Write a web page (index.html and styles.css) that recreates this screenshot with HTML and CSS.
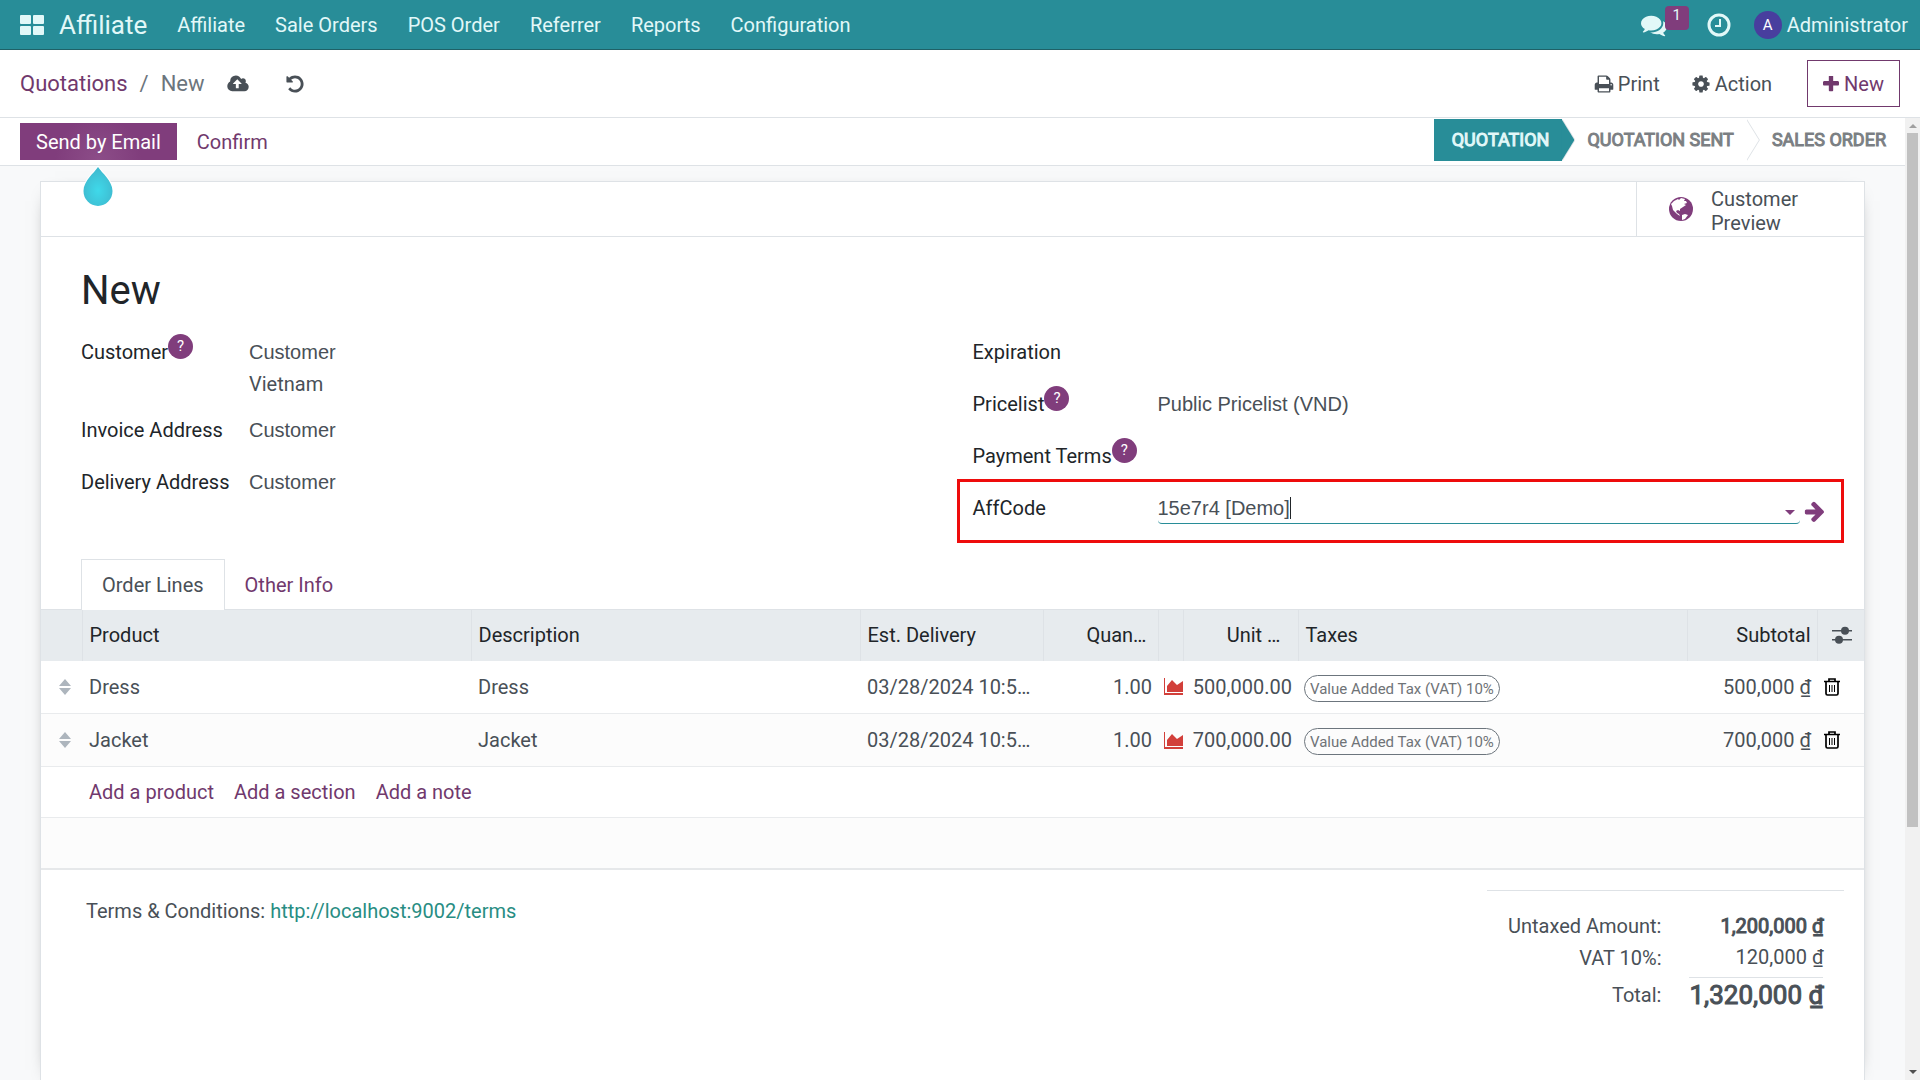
FILE: index.html
```html
<!DOCTYPE html>
<html lang="en">
<head>
    <meta charset="UTF-8">
    <meta name="viewport" content="width=device-width, initial-scale=1.0">
    <title>New - Quotations</title>
    <link rel="stylesheet" href="styles.css">
</head>
<body>

    <!-- shared icons -->
    <svg class="sprite" aria-hidden="true">
        <symbol id="i-chart" viewBox="0 0 19 17"><path d="M0 0h1v15h18v2H0zM3 14V8l5-6 5 5 6-4v11z"/></symbol>
        <symbol id="i-trash" viewBox="0 0 16 18">
            <path d="M0 3.500h16M5 3V1h6v2M2 4v11.500q0 1.500 1.500 1.500h9q1.500 0 1.500-1.500V4" fill="none" stroke="currentColor" stroke-width="1.700"/>
            <path d="M5.500 7v7M8 7v7M10.500 7v7" fill="none" stroke="currentColor" stroke-width="1"/>
        </symbol>
        <symbol id="i-sort" viewBox="0 0 12 16"><path d="M0 7l6-7 6 7zM0 9h12l-6 7z"/></symbol>
    </svg>

    <header class="navbar">
        <a href="#" class="apps" aria-label="Apps">
            <svg viewBox="0 0 24 20" width="24" height="20"><rect width="11" height="9" rx="1"/><rect x="13" width="11" height="9" rx="1"/><rect y="11" width="11" height="9" rx="1"/><rect x="13" y="11" width="11" height="9" rx="1"/></svg>
        </a>
        <a href="#" class="brand">Affiliate</a>
        <nav class="menu">
            <a href="#">Affiliate</a>
            <a href="#">Sale Orders</a>
            <a href="#">POS Order</a>
            <a href="#">Referrer</a>
            <a href="#">Reports</a>
            <a href="#">Configuration</a>
        </nav>
        <div class="systray">
            <button type="button" class="chat" aria-label="Messages">
                <svg viewBox="0 0 1792 1792" width="26" height="26"><path d="M1408 768q0 139-94 257t-256.500 186.500-353.500 68.500q-86 0-176-16-124 88-278 128-36 9-86 16h-3q-11 0-20.500-8t-11.500-21q-1-3-1-6.500t.5-6.500 2-6l2.500-5 3.500-5.500 4-5 4.500-5 4-4.500q5-6 23-25t26-29.500 22.500-29 25-38.500 20.500-44q-124-72-195-177t-71-224q0-139 94-257t256.500-186.500 353.500-68.500 353.500 68.500 256.500 186.500 94 257zm384 256q0 120-71 224.500t-195 176.500q10 24 20.500 44t25 38.500 22.500 29 26 29.500 23 25q1 1 4 4.500t4.500 5 4 5 3.500 5.500l2.500 5 2 6 .5 6.500-1 6.500q-3 14-13 22t-22 7q-50-7-86-16-154-40-278-128-90 16-176 16-271 0-472-132 58 4 88 4 161 0 309-45t264-129q125-92 192-212t67-254q0-77-23-152 129 71 204 178t75 230z"/></svg>
                <span class="count">1</span>
            </button>
            <button type="button" class="clock" aria-label="Activities">
                <svg viewBox="0 0 24 24" width="24" height="24"><circle cx="12" cy="12" r="10" fill="none" stroke="currentColor" stroke-width="3"/><path d="M13 6v7H8" fill="none" stroke="currentColor" stroke-width="2"/></svg>
            </button>
            <button type="button" class="user"><span class="avatar">A</span>Administrator</button>
        </div>
    </header>

    <div class="control-panel">
        <nav class="breadcrumb"><a href="#">Quotations</a><span>/</span><span>New</span></nav>
        <button type="button" class="icon-btn" aria-label="Save">
            <svg viewBox="0 0 1920 1792" width="22" height="20"><path d="M1280 864q0-14-9-23l-352-352q-9-9-23-9t-23 9l-351 351q-10 12-10 24 0 14 9 23t23 9h224v352q0 13 9.500 22.500t22.500 9.500h192q13 0 22.500-9.500t9.500-22.500v-352h224q13 0 22.500-9.500t9.500-22.500zm640 288q0 159-112.500 271.500t-271.500 112.500h-1088q-185 0-316.500-131.500t-131.500-316.500q0-130 70-240t188-165q-2-30-2-43 0-212 150-362t362-150q156 0 285.500 87t188.500 231q71-62 166-62 106 0 181 75t75 181q0 76-41 138 130 31 213.500 135.500t83.500 238.500z"/></svg>
        </button>
        <button type="button" class="icon-btn" aria-label="Discard">
            <svg viewBox="0 0 1792 1792" width="20" height="20"><path d="M1664 896q0 156-61 298t-164 245-245 164-298 61q-172 0-327-72.500t-264-204.500q-7-10-6.500-22.500t8.500-20.500l137-138q10-9 25-9 16 2 23 12 73 95 179 147t225 52q104 0 198.500-40.500t163.500-109.500 109.500-163.500 40.500-198.500-40.500-198.500-109.500-163.500-163.500-109.500-198.500-40.500q-98 0-188 35.500t-160 101.500l137 138q31 30 14 69-17 40-59 40h-448q-26 0-45-19t-19-45v-448q0-42 40-59 39-17 69 14l130 129q107-101 244.500-156.500t284.500-55.500q156 0 298 61t245 164 164 245 61 298z"/></svg>
        </button>
        <div class="actions">
            <button type="button" class="action">
                <svg viewBox="0 0 1792 1792" width="20" height="20"><path d="M448 1536h896v-256h-896v256zm0-640h896v-384h-160q-40 0-68-28t-28-68v-160h-640v640zm1152 64q0-26-19-45t-45-19-45 19-19 45 19 45 45 19 45-19 19-45zm128 0v416q0 13-9.500 22.500t-22.500 9.500h-224v160q0 40-28 68t-68 28h-960q-40 0-68-28t-28-68v-160h-224q-13 0-22.500-9.500t-9.500-22.500v-416q0-79 56.500-135.500t135.500-56.500h64v-544q0-40 28-68t68-28h672q40 0 88 20t76 48l152 152q28 28 48 76t20 88v256h64q79 0 135.500 56.500t56.500 135.500z"/></svg>Print
            </button>
            <button type="button" class="action">
                <svg viewBox="0 0 1792 1792" width="20" height="20"><path d="M1152 896q0-106-75-181t-181-75-181 75-75 181 75 181 181 75 181-75 75-181zm512-109v222q0 12-8 23t-20 13l-185 28q-19 54-39 91 35 50 107 138 10 12 10 25t-9 23q-27 37-99 108t-94 71q-12 0-26-9l-138-108q-44 23-91 38-16 136-29 186-7 28-36 28h-222q-14 0-24.500-8.500t-11.500-21.500l-28-184q-49-16-90-37l-141 107q-10 9-25 9-14 0-25-11-126-114-165-168-7-10-7-23 0-12 8-23 15-21 51-66.500t54-70.500q-27-50-41-99l-183-27q-13-2-21-12.500t-8-23.500v-222q0-12 8-23t19-13l186-28q14-46 39-92-40-57-107-138-10-12-10-24 0-10 9-23 26-36 98.500-107.500t94.500-71.500q13 0 26 10l138 107q44-23 91-38 16-136 29-186 7-28 36-28h222q14 0 24.500 8.500t11.500 21.500l28 184q49 16 90 37l142-107q9-9 24-9 13 0 25 10 129 119 165 170 7 8 7 22 0 12-8 23-15 21-51 66.500t-54 70.500q26 50 41 98l183 28q13 2 21 12.500t8 23.500z"/></svg>Action
            </button>
            <button type="button" class="new-btn">
                <svg viewBox="192 192 1408 1408" width="16" height="16"><path d="M1600 736v192q0 40-28 68t-68 28h-416v416q0 40-28 68t-68 28h-192q-40 0-68-28t-28-68v-416h-416q-40 0-68-28t-28-68v-192q0-40 28-68t68-28h416v-416q0-40 28-68t68-28h192q40 0 68 28t28 68v416h416q40 0 68 28t28 68z"/></svg>New
            </button>
        </div>
    </div>

    <div class="viewport">
        <main class="content">

            <div class="statusbar">
                <div class="send-wrap">
                    <button type="button" class="send">Send by Email</button>
                    <svg class="drop" viewBox="0 0 34 44" width="34" height="44">
                        <defs><radialGradient id="dropfill" cx="50%" cy="60%" r="55%"><stop offset="0" stop-color="#3fd9ea"/><stop offset="1" stop-color="#3fbbd0"/></radialGradient></defs>
                        <path d="M17 3C21 9 31.500 17 31.500 27a14.500 15 0 0 1-29 0C2.500 17 13 9 17 3z" fill="url(#dropfill)" stroke="#fff" stroke-width="2" paint-order="stroke"/>
                    </svg>
                </div>
                <button type="button" class="confirm">Confirm</button>
                <ol class="stages">
                    <li class="current">Quotation</li>
                    <li>Quotation Sent</li>
                    <li>Sales Order</li>
                </ol>
            </div>

            <div class="sheet-bg">
                <div class="sheet">
                    <div class="button-box">
                        <button type="button" class="preview">
                            <svg viewBox="0 0 24 24" width="24" height="24"><circle cx="12" cy="12" r="12"/><path d="M5 4l4-2 1 1 2-2 4 1-1 2 2 0 1 2-3 1 2 1-3 2-3 2 0 2-2-1-2 1 1 2 2 1 1 2-3-2-4-4-1-4-1-2zM13 18l3-1 3 1-3 4-3 1z" fill="#fff"/></svg>
                            <span>Customer<br>Preview</span>
                        </button>
                    </div>

                    <div class="sheet-body">
                        <h1>New</h1>
                        <form class="groups" autocomplete="off">
                            <div class="group">
                                <div class="field tall">
                                    <div class="label"><label for="customer">Customer</label><sup>?</sup></div>
                                    <div class="value"><input type="text" id="customer" value="Customer"><span>Vietnam</span></div>
                                </div>
                                <div class="field">
                                    <div class="label"><label for="invoice">Invoice Address</label></div>
                                    <div class="value"><input type="text" id="invoice" value="Customer"></div>
                                </div>
                                <div class="field">
                                    <div class="label"><label for="delivery">Delivery Address</label></div>
                                    <div class="value"><input type="text" id="delivery" value="Customer"></div>
                                </div>
                            </div>
                            <div class="group right">
                                <div class="field">
                                    <div class="label"><label for="expiration">Expiration</label></div>
                                    <div class="value"><input type="text" id="expiration"></div>
                                </div>
                                <div class="field">
                                    <div class="label"><label for="pricelist">Pricelist</label><sup>?</sup></div>
                                    <div class="value"><input type="text" id="pricelist" value="Public Pricelist (VND)"></div>
                                </div>
                                <div class="field">
                                    <div class="label"><label for="terms">Payment Terms</label><sup>?</sup></div>
                                    <div class="value"><input type="text" id="terms"></div>
                                </div>
                                <div class="field marked">
                                    <div class="label"><label for="affcode">AffCode</label></div>
                                    <div class="value active"><input type="text" id="affcode" value="15e7r4 [Demo]"><i class="cursor"></i><i class="caret"></i></div>
                                    <button type="button" class="open" aria-label="Open record">
                                        <svg viewBox="64 120 1536 1620" width="20" height="21"><path d="M1600 960q0 54-37 91l-651 651q-39 37-91 37-51 0-90-37l-75-75q-38-38-38-91t38-91l293-293h-704q-52 0-84.500-37.500t-32.500-90.500v-128q0-53 32.500-90.500t84.500-37.500h704l-293-294q-38-36-38-90t38-90l75-75q38-38 90-38 53 0 91 38l651 651q37 35 37 90z"/></svg>
                                    </button>
                                </div>
                            </div>
                        </form>
                        <div class="tabs">
                            <a href="#" class="tab selected">Order Lines</a>
                            <a href="#" class="tab">Other Info</a>
                        </div>
                    </div>

                    <table class="lines">
                        <colgroup>
                            <col class="c-handle"><col><col><col class="c-date"><col class="c-qty"><col class="c-chart"><col class="c-price"><col><col class="c-sub"><col class="c-opt">
                        </colgroup>
                        <thead>
                            <tr>
                                <th></th>
                                <th>Product</th>
                                <th>Description</th>
                                <th>Est. Delivery</th>
                                <th class="num cut">Quan…</th>
                                <th></th>
                                <th class="num cut price">Unit …</th>
                                <th>Taxes</th>
                                <th class="num">Subtotal</th>
                                <th class="opt"><svg viewBox="0 0 20 18" width="20" height="18"><path d="M0 4h20v1.500H0zM0 13h20v1.500H0z"/><circle cx="13" cy="4.700" r="4"/><circle cx="7" cy="13.700" r="4"/></svg></th>
                            </tr>
                        </thead>
                        <tbody>
                            <tr>
                                <td class="handle"><svg width="12" height="16"><use href="#i-sort"/></svg></td>
                                <td>Dress</td>
                                <td>Dress</td>
                                <td>03/28/2024 10:5…</td>
                                <td class="num">1.00</td>
                                <td class="chart"><svg width="19" height="17"><use href="#i-chart"/></svg></td>
                                <td class="num">500,000.00</td>
                                <td><span class="tag">Value Added Tax (VAT) 10%</span></td>
                                <td class="num">500,000 ₫</td>
                                <td class="del"><button type="button" aria-label="Delete"><svg width="16" height="18"><use href="#i-trash"/></svg></button></td>
                            </tr>
                            <tr>
                                <td class="handle"><svg width="12" height="16"><use href="#i-sort"/></svg></td>
                                <td>Jacket</td>
                                <td>Jacket</td>
                                <td>03/28/2024 10:5…</td>
                                <td class="num">1.00</td>
                                <td class="chart"><svg width="19" height="17"><use href="#i-chart"/></svg></td>
                                <td class="num">700,000.00</td>
                                <td><span class="tag">Value Added Tax (VAT) 10%</span></td>
                                <td class="num">700,000 ₫</td>
                                <td class="del"><button type="button" aria-label="Delete"><svg width="16" height="18"><use href="#i-trash"/></svg></button></td>
                            </tr>
                            <tr class="add">
                                <td></td>
                                <td colspan="9"><div class="add-links"><a href="#">Add a product</a><a href="#">Add a section</a><a href="#">Add a note</a></div></td>
                            </tr>
                            <tr class="blank"><td colspan="10"></td></tr>
                        </tbody>
                    </table>

                    <div class="bottom">
                        <p class="conditions">Terms &amp; Conditions: <a href="#">http://localhost:9002/terms</a></p>
                        <div class="totals">
                            <table>
                                <tr><th>Untaxed Amount:</th><td><b>1,200,000 ₫</b></td></tr>
                                <tr class="vat"><th>VAT 10%:</th><td>120,000 ₫</td></tr>
                                <tr class="total"><th>Total:</th><td><b>1,320,000 ₫</b></td></tr>
                            </table>
                        </div>
                    </div>
                </div>
            </div>
        </main>

        <div class="scrollbar"><i class="up"></i><i class="thumb"></i><i class="down"></i></div>
    </div>

</body>
</html>
```

FILE: styles.css
```css
*{box-sizing: border-box;}
body{
    margin: 0;
    height: 100vh;
    display: flex;
    flex-direction: column;
    overflow: hidden;
    font-family: Roboto, "Liberation Sans", sans-serif;
    font-size: 20px;
    line-height: 30px;
    color: #495057;
    background-color: #fff;
}
a{color: #71396d; text-decoration: none;}
button{
    padding: 0;
    border: 0;
    background: none;
    font: inherit;
    color: inherit;
    cursor: pointer;
}
svg{display: block; fill: currentColor;}
.sprite{position: absolute; width: 0; height: 0;}

/* top bar */
.navbar{
    display: flex;
    align-items: center;
    flex: none;
    height: 50px;
    padding: 0 12px 0 20px;
    border-bottom: 1px solid #1f6167;
    background-color: #288d98;
    color: #e2f8f8;
}
.navbar a{color: inherit;}
.brand{margin: 0 30px 0 15px; font-size: 26px;}
.menu{display: flex; gap: 30px;}
.systray{
    display: flex;
    align-items: center;
    margin-left: auto;
}
.chat{position: relative; margin-right: 40px;}
.count{
    position: absolute;
    top: -6px;
    left: 24px;
    width: 24px;
    height: 24px;
    border-radius: 4px;
    background-color: #803d7c;
    font-size: 15px;
    line-height: 18px;
}
.clock{margin-right: 23px;}
.user{display: flex; align-items: center; gap: 5px;}
.avatar{
    width: 28px;
    height: 28px;
    border-radius: 50%;
    background-color: #483e9e;
    color: #fff;
    font-size: 15px;
    line-height: 28px;
}

/* breadcrumb and actions */
.control-panel{
    display: flex;
    align-items: center;
    flex: none;
    height: 68px;
    padding: 0 20px;
    border-bottom: 1px solid #dee2e6;
}
.breadcrumb{
    display: flex;
    gap: 12px;
    margin-right: 22px;
    font-size: 22px;
    color: #6c757d;
}
.icon-btn{margin-right: 36px;}
.actions{display: flex; align-items: center; margin-left: auto;}
.action{display: flex; align-items: center; gap: 4px; margin-right: 31px;}
.new-btn{
    display: flex;
    align-items: center;
    gap: 5px;
    height: 47px;
    margin-left: 4px;
    padding: 0 15px;
    border: 1px solid #71396d;
    color: #71396d;
}

.viewport{display: flex; flex: 1; min-height: 0;}
.content{
    display: flex;
    flex-direction: column;
    flex: 1;
    min-width: 0;
    overflow: hidden;
}

/* status bar */
.statusbar{
    display: flex;
    align-items: center;
    flex: none;
    height: 48px;
    padding-left: 20px;
    border-bottom: 1px solid #dee2e6;
}
.send-wrap{position: relative;}
.send{
    display: block;
    height: 37px;
    padding: 0 16px;
    background: radial-gradient(circle at 50% 100%, #8c4d88, #803d7c 50%);
    color: #fff;
}
.drop{
    position: absolute;
    top: 41px;
    left: calc(50% - 17px);
}
.confirm{margin-left: 20px; color: #71396d;}
.stages{
    display: flex;
    align-self: flex-start;
    margin: 1px 0 0 auto;
    padding: 0;
    list-style: none;
    font-size: 18px;
    line-height: 42px;
    text-transform: uppercase;
    color: #7b7f83;
    -webkit-text-stroke: 1px currentColor;
}
.stages li{position: relative; padding: 0 13px 0 25px;}
.stages .current{
    padding: 0 13px 0 18px;
    background-color: #288d98;
    color: #e2f8f8;
}
.stages li:last-child{padding-right: 19px;}
.stages li:not(:last-child)::before,
.stages li:not(:last-child)::after{
    content: "";
    position: absolute;
    z-index: 1;
    top: 0;
    left: 100%;
    width: 13px;
    height: 42px;
    background-color: #dee2e6;
    clip-path: polygon(0 0, 100% 50%, 0 100%);
}
.stages li:not(:last-child)::after{
    left: calc(100% - 1px);
    background-color: #fff;
}
.stages .current:not(:last-child)::after{background-color: #288d98;}

/* sheet */
.sheet-bg{
    flex: 1;
    padding: 15px 40px 0;
    background-color: #f8f9fa;
}
.sheet{
    height: 100%;
    border: 1px solid #dee2e6;
    border-bottom: 0;
    background-color: #fff;
    box-shadow: 0 5px 20px -15px #000;
}
.button-box{
    display: flex;
    justify-content: flex-end;
    border-bottom: 1px solid #dee2e6;
}
.preview{
    display: flex;
    align-items: center;
    gap: 18px;
    width: 228px;
    height: 54px;
    padding-left: 32px;
    border-left: 1px solid #dee2e6;
    line-height: 24px;
    text-align: left;
}
.preview svg{color: #803d7c;}
.preview span{padding-top: 4px;}
.sheet-body{padding: 30px 40px 0;}
h1{
    margin: 0 0 22px;
    font-size: 40px;
    font-weight: 400;
    line-height: 48px;
    color: #212529;
}
.groups{display: grid; grid-template-columns: 1fr 1fr; gap: 40px;}
.field{
    position: relative;
    display: flex;
    height: 52px;
}
.field.tall{height: 78px;}
.label{
    display: flex;
    align-items: flex-start;
    width: 168px;
    height: 30px;
    color: #212529;
    white-space: nowrap;
}
.right .label{width: 185px;}
sup{
    width: 25px;
    height: 25px;
    margin-top: -3px;
    border-radius: 50%;
    background-color: #803d7c;
    color: #fff;
    font-size: 15px;
    line-height: 25px;
    text-align: center;
}
.value{position: relative; flex: 1;}
.value input{
    display: block;
    width: 100%;
    height: 31px;
    padding: 0;
    border: 0;
    border-bottom: 1px solid transparent;
    border-radius: 4px;
    outline: none;
    background: none;
    font-family: "Liberation Sans", Arial, sans-serif;
    font-size: 20px;
    color: #495057;
}
.value span{display: block; line-height: 32px;}
.active input{border-bottom-color: #288d98;}
.cursor{
    position: absolute;
    top: 4px;
    left: 132px;
    width: 1px;
    height: 22px;
    background-color: #212529;
}
.caret{
    position: absolute;
    top: 17px;
    right: 5px;
    border: 5px solid transparent;
    border-top-color: #803d7c;
    border-bottom: 0;
}
.open{align-self: flex-start; margin: 8px 0 0 4px; color: #803d7c;}
.marked::after{
    content: "";
    position: absolute;
    inset: -14px -20px 2px -16px;
    border: 3px solid #ee0c0c;
    pointer-events: none;
}

/* tabs */
.tabs{display: flex; margin-top: 14px;}
.tab{
    height: 50px;
    margin-right: -1px;
    padding: 0 20px;
    border: 1px solid transparent;
    border-bottom: 0;
    line-height: 50px;
}
.tab.selected{
    z-index: 1;
    height: 51px;
    margin-bottom: -1px;
    border-color: #dee2e6;
    background-color: #fff;
    color: #495057;
}

/* order lines */
.lines{
    width: 100%;
    table-layout: fixed;
    border-collapse: collapse;
    border-bottom: 2px solid #e6e8ea;
}
.c-handle{width: 41px;}
.c-date{width: 183px;}
.c-qty{width: 115px;}
.c-chart{width: 25px;}
.c-price{width: 115px;}
.c-sub{width: 130px;}
.c-opt{width: 47px;}
.lines th{
    height: 51px;
    padding: 0 7px;
    border-top: 1px solid #dee2e6;
    border-right: 1px solid #dee2e6;
    background-color: #e7ebee;
    color: #212529;
    font-weight: 400;
    text-align: left;
    white-space: nowrap;
}
.lines th:last-child{border-right: 0;}
.lines td{
    height: 53px;
    padding: 0 7px;
    border-bottom: 1px solid #e9ebed;
    white-space: nowrap;
}
.lines tr:nth-child(even) td{background-color: #fcfcfc;}
.lines .num{padding: 0 6px; text-align: right;}
.lines .cut{padding-right: 11px;}
.lines .price{padding-right: 17px;}
.lines .opt{padding: 0 0 0 14px; color: #495057;}
.lines .handle{padding-left: 18px; color: #adb5bd;}
.lines .chart{padding: 0 0 0 6px; color: #d23f3a;}
.lines .del{padding: 0 0 0 7px; color: #000;}
.del button{display: block;}
.tag{
    display: inline-block;
    height: 27px;
    margin-left: -1px;
    padding: 0 5px;
    border: 1px solid #6c757d;
    border-radius: 14px;
    font-size: 15px;
    line-height: 26px;
    vertical-align: middle;
    color: #6f7377;
}
.lines .add td,
.lines .blank td{height: 51px;}
.add-links{display: flex; gap: 20px;}

/* terms and totals */
.bottom{
    display: flex;
    justify-content: space-between;
    padding: 20px 20px 0 45px;
}
.conditions{margin: 6px 0 0;}
.conditions a{color: #288d83;}
.totals{
    width: 357px;
    padding: 19px 21px 0;
    border-top: 1px solid #dee2e6;
}
.totals table{
    margin-left: auto;
    border-collapse: collapse;
    white-space: nowrap;
}
.totals th{
    padding: 0 28px 0 0;
    font-weight: 400;
    text-align: right;
}
.totals td{
    height: 32px;
    padding: 0;
    text-align: right;
}
.totals b{font-weight: 400; -webkit-text-stroke: 1px currentColor;}
.totals .vat th,
.totals .vat td{height: 36px; padding-bottom: 4px;}
.totals .total td{
    height: 34px;
    border-top: 1px solid #dee2e6;
    font-size: 26px;
}

.scrollbar{
    display: flex;
    flex-direction: column;
    align-items: center;
    flex: none;
    width: 15px;
    padding: 6px 0;
    background-color: #f1f1f1;
}
.scrollbar .thumb{
    width: 11px;
    height: 73%;
    margin-top: 5px;
    background-color: #c1c1c1;
}
.scrollbar .up{border: 4px solid transparent; border-top: 0; border-bottom-color: #a0a0a0;}
.scrollbar .down{margin-top: auto; border: 4px solid transparent; border-bottom: 0; border-top-color: #505050;}
```
